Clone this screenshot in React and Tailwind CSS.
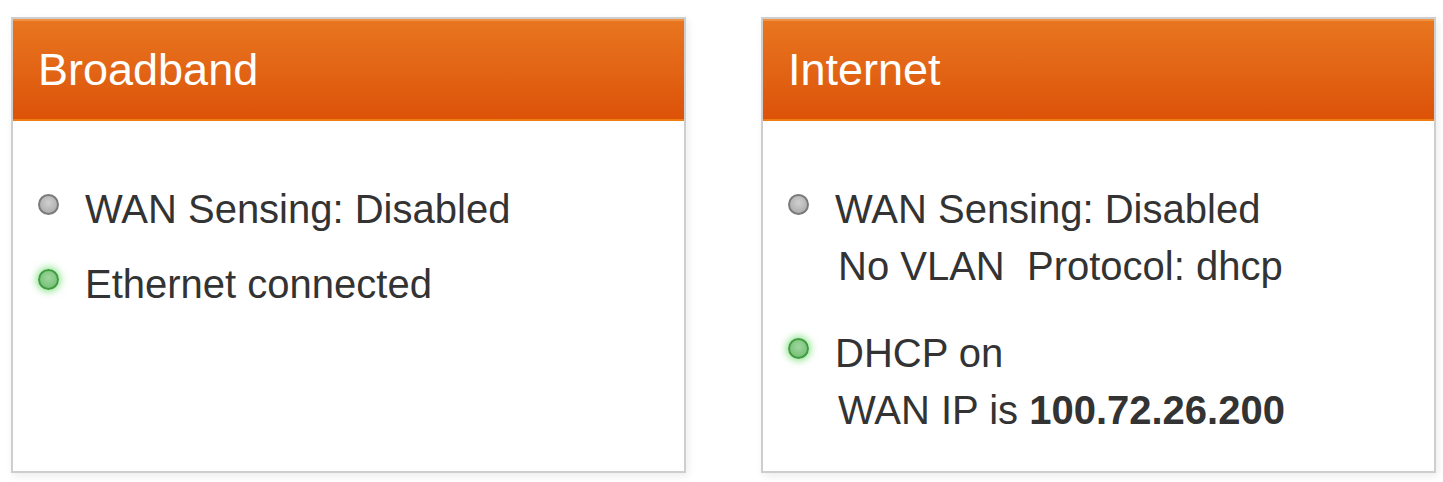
const font = { fontFamily: '"Liberation Sans", Arial, sans-serif' };

const Dot = ({ on }) => (
  <span
    className={`mt-[13px] h-[21px] w-[21px] shrink-0 rounded-full border-2 ${
      on
        ? 'border-[#3f9c3f] bg-[radial-gradient(circle_at_50%_40%,#9fd69f,#6dbb6d)] shadow-[0_0_7px_2px_rgba(60,210,60,0.55)]'
        : 'border-[#7a7a7a] bg-[radial-gradient(circle_at_50%_40%,#d0d0d0,#a3a3a3)]'
    }`}
  />
);

const Item = ({ on, children, className = '' }) => (
  <div className={`flex gap-[26px] ${className}`}>
    <Dot on={on} />
    <div className="leading-[57px]">{children}</div>
  </div>
);

const Card = ({ title, children }) => (
  <div className="flex h-[456px] w-[675px] flex-col border-2 border-[#cecece] bg-white shadow-[2px_3px_8px_rgba(0,0,0,0.08)]">
    <div className="flex h-[102px] items-center border-b-2 border-[#f07d12] bg-gradient-to-b from-[#e8761f] to-[#dc5208] pl-[25px] pt-[2px] shadow-[inset_0_2px_0_rgba(255,200,140,0.35)]">
      <span className="text-[45px] text-white">{title}</span>
    </div>
    <div className="flex flex-col pl-[25px] pt-[60px] text-[40px] text-[#333]">{children}</div>
  </div>
);

export default function App() {
  return (
    <div className="min-h-[482px] bg-white pl-[11px] pt-[17px]" style={font}>
      <div className="flex gap-[75px]">
        <Card title="Broadband">
          <Item on={false}>WAN Sensing: Disabled</Item>
          <Item on className="mt-[18px]">Ethernet connected</Item>
        </Card>
        <Card title="Internet">
          <Item on={false}>
            <div>WAN Sensing: Disabled</div>
            <div className="pl-[3px]">No VLAN&nbsp;&nbsp;Protocol: dhcp</div>
          </Item>
          <Item on className="mt-[30px]">
            <div>DHCP on</div>
            <div className="pl-[3px]">
              WAN IP is <b className="font-bold">100.72.26.200</b>
            </div>
          </Item>
        </Card>
      </div>
    </div>
  );
}
